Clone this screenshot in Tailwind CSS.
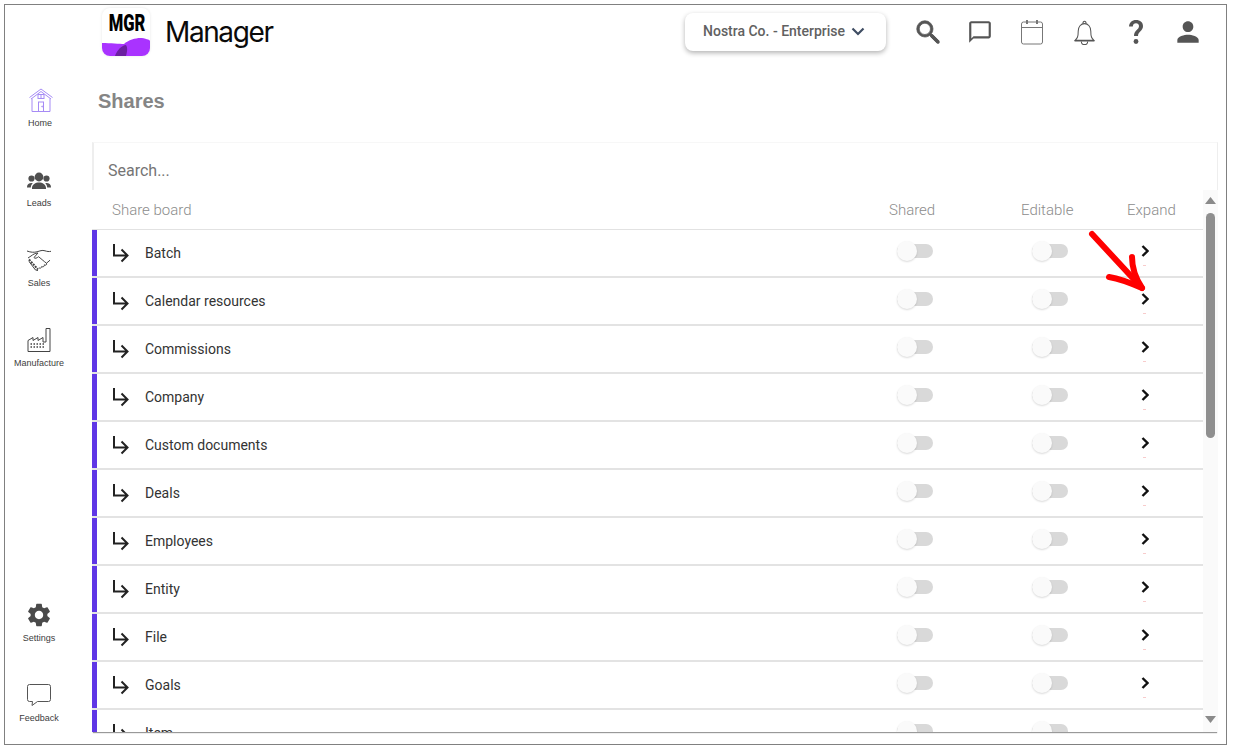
<!DOCTYPE html>
<html><head><meta charset="utf-8"><script src="https://cdn.jsdelivr.net/npm/@tailwindcss/browser@4"></script></head>
<body class="bg-white font-['Roboto',sans-serif] overflow-hidden">
<div class="pl-1 pt-1">
<div class="relative flex w-[1223px] h-[741px] border border-[#808080] bg-white overflow-hidden">

  <!-- sidebar -->
  <aside class="w-[87px] shrink-0 flex flex-col justify-between pt-[79px] pb-[21px] font-['Liberation_Sans',sans-serif] text-[9px] leading-3 text-[#3d3d3d]">
    <div class="w-[68px] flex flex-col gap-9">
      <div class="h-11 flex flex-col items-center">
        <div class="h-8 flex items-center justify-center ml-[3px]">
          <svg width="26" height="26" viewBox="0 0 26 26" fill="none" stroke="#a68bf5" stroke-width="1"><path d="M1.500 10.500 13 2l11.500 8.500M3 12 13 4.500 23 12M4 11.500V24.500H22V11.500"/><rect x="10" y="7.500" width="6" height="4"/><path d="M13 7.500v4"/><rect x="10.500" y="15" width="5" height="9.500"/><circle cx="14.200" cy="19.500" r=".5"/></svg>
        </div>
        <span class="h-3 pt-px ml-[2px]">Home</span>
      </div>
      <div class="h-11 flex flex-col items-center">
        <div class="h-8 flex items-center justify-center pt-0.5">
          <svg width="24" height="18" viewBox="0 0 24 18" fill="#4f4f4f"><circle cx="12" cy="5" r="4.400"/><circle cx="4.500" cy="6.500" r="3.100"/><circle cx="19.500" cy="6.500" r="3.100"/><path d="M5 16c0-3.500 3.500-5.500 7-5.500s7 2 7 5.500v1H5zM0 15c0-2.500 2-4 4.500-4 .5 0 1 .1 1.200.2C4.500 12.300 3.800 14 3.800 15.500H0zM24 15c0-2.500-2-4-4.500-4-.5 0-1 .1-1.200.2 1.200 1.100 1.900 2.800 1.900 4.300H24z"/></svg>
        </div>
        <span class="h-3 pt-px">Leads</span>
      </div>
      <div class="h-11 flex flex-col items-center">
        <div class="h-8 flex items-center justify-center pt-0.5">
          <svg width="26" height="24" viewBox="0 0 26 24" fill="none" stroke="#444" stroke-width="1"><path d="M1 2c4 1.500 7 1.500 10 .8 3-.8 5-2 8-1 2 .7 4 1 6 .5M2 9l3-2c2-1.500 4-2.800 7-3M12 4 8 8.500c1 1.500 3 .5 4.500-.8 1.500 1 5.500 4.800 8 6.500l3.500-3M20.500 14.200c.8 1.500-1 2.600-2.200 1.600M18.300 15.800c.5 1.500-1.300 2.700-2.600 1.700M15.700 17.500c0 1.500-1.700 2.200-2.800 1.200"/><path stroke-width="2" stroke-dasharray="2 1" d="M3 10.500 12 20.500"/><path d="M3 12.500 9.500 21l2.500.5"/></svg>
        </div>
        <span class="h-3 pt-px">Sales</span>
      </div>
      <div class="h-11 flex flex-col items-center">
        <div class="h-8 flex items-center justify-center">
          <svg width="24" height="24" viewBox="0 0 24 24" fill="none" stroke="#444" stroke-width="1"><path d="M1 23.500V12.500L6 9.500V12.500L11 9.500V12.500L16 9.500V14H19V.5H23V23.500Z"/><path stroke-width="1.500" stroke-dasharray="1.500 1.500" d="M3.500 16H17M3.500 19H17"/></svg>
        </div>
        <span class="h-3 pt-px">Manufacture</span>
      </div>
    </div>
    <div class="w-[68px] flex flex-col gap-9">
      <div class="h-11 flex flex-col items-center">
        <div class="h-8 flex items-center justify-center">
          <svg width="28" height="28" viewBox="0 0 24 24" fill="#4a4a4a"><path d="M19.140 12.940c.04-.3.06-.61.06-.94 0-.32-.02-.64-.07-.94l2.030-1.580c.18-.14.23-.41.12-.61l-1.920-3.320c-.12-.22-.37-.29-.59-.22l-2.390.96c-.5-.38-1.030-.7-1.620-.94l-.36-2.540c-.04-.24-.24-.41-.48-.41h-3.840c-.24 0-.43.17-.47.41l-.36 2.540c-.59.24-1.130.57-1.620.94l-2.390-.96c-.22-.08-.47 0-.59.22L2.740 8.870c-.12.21-.08.47.12.61l2.030 1.580c-.05.3-.09.63-.09.94s.02.64.07.94l-2.030 1.580c-.18.14-.23.41-.12.61l1.920 3.320c.12.22.37.29.59.22l2.390-.96c.5.38 1.030.7 1.620.94l.36 2.540c.05.24.24.41.48.41h3.840c.24 0 .44-.17.47-.41l.36-2.540c.59-.24 1.130-.56 1.620-.94l2.390.96c.22.08.47 0 .59-.22l1.920-3.320c.12-.22.07-.47-.12-.61l-2.010-1.580zM12 15.600c-1.980 0-3.600-1.620-3.600-3.600s1.620-3.600 3.600-3.600 3.600 1.620 3.600 3.600-1.620 3.600-3.600 3.600z"/></svg>
        </div>
        <span class="h-3 pt-px">Settings</span>
      </div>
      <div class="h-11 flex flex-col items-center">
        <div class="h-8 flex items-center justify-center">
          <svg width="24" height="22" viewBox="0 0 24 22" fill="none" stroke="#555" stroke-width="1"><path d="M2.500.5h19a2 2 0 0 1 2 2v13a2 2 0 0 1-2 2H10.500L5 21.500l.5-4h-3a2 2 0 0 1-2-2v-13a2 2 0 0 1 2-2z"/></svg>
        </div>
        <span class="h-3 pt-px">Feedback</span>
      </div>
    </div>
  </aside>

  <!-- main -->
  <main class="flex-1 min-w-0 flex flex-col">
    <header class="h-[54px] shrink-0 flex items-center pr-3 pl-[10px]">
      <div class="relative w-12 h-12 rounded-lg bg-white shadow-[0_0_3px_rgba(0,0,0,0.1)] overflow-hidden shrink-0">
        <svg class="absolute inset-0" width="48" height="48" viewBox="0 0 48 48"><path fill="#a933ff" d="M0 35C8 35 18 36 22 36 26 32 34 30 38 30 43 30 48 32 48 33V48H0Z"/><path fill="#6b1fa0" d="M13 48C15 42 20 37 24 37 26 40 25 44 24 48Z"/></svg>
        <div class="absolute top-[2px] inset-x-0 text-center font-['Roboto',sans-serif] font-black text-[23px] leading-7 text-black scale-x-[0.72]">MGR</div>
      </div>
      <span class="ml-[15px] font-['Inter',sans-serif] text-[28px] tracking-[-1.4px] text-[#0a0a0a]">Manager</span>
      <div class="ml-auto mr-4 w-[201px] h-[38px] rounded-lg bg-white shadow-[0_2px_5px_rgba(0,0,0,0.3)] flex items-center pl-[18px] gap-[5px] pb-0.5 text-sm font-medium text-[#616161]">
        <span>Nostra Co. - Enterprise</span>
        <svg width="16" height="16" viewBox="0 0 16 16" fill="none" stroke="#3f4d63" stroke-width="2.200"><path d="M2.500 5.500 8 11l5.500-5.500"/></svg>
      </div>
      <div class="w-[52px] flex justify-center">
        <svg width="30" height="30" viewBox="0 0 24 24" fill="#555"><path d="M15.500 14h-.79l-.28-.27A6.470 6.470 0 0 0 16 9.500 6.500 6.500 0 1 0 9.500 16c1.610 0 3.090-.59 4.230-1.570l.27.28v.79l5 4.990L20.490 19l-4.990-5zm-6 0C7.010 14 5 11.990 5 9.500S7.010 5 9.500 5 14 7.010 14 9.500 11.990 14 9.500 14z" stroke="#555" stroke-width=".6"/><path d="M15 15l5 5" stroke="#555" stroke-width="2.800" stroke-linecap="round"/></svg>
      </div>
      <div class="w-[52px] flex justify-center">
        <svg width="26" height="26" viewBox="0 0 24 24" fill="#555"><path d="M20 2H4c-1.100 0-2 .9-2 2v18l4-4h14c1.100 0 2-.9 2-2V4c0-1.100-.9-2-2-2zm0 14H6l-2 2V4h16v12z"/></svg>
      </div>
      <div class="w-[52px] flex justify-center">
        <svg width="24" height="26" viewBox="0 0 24 26" fill="none" stroke="#777" stroke-width="1"><rect x="1.500" y="3" width="21" height="22" rx="2"/><path d="M1.500 8.500h21"/><path stroke-width="2" d="M7 1v4M17 1v4"/></svg>
      </div>
      <div class="w-[52px] flex justify-center">
        <svg width="23" height="28" viewBox="0 0 22 26" fill="none" stroke="#555" stroke-width="1"><path d="M2 21c2-2 3-3 3-9 0-4 2.500-7 6-7s6 3 6 7c0 6 1 7 3 9zM1.500 21.500h19"/><path d="M9.500 5c0-3 3-3 3 0M8 22c0 4 6 4 6 0"/></svg>
      </div>
      <div class="w-[52px] flex justify-center">
        <svg width="18" height="26" viewBox="0 0 18 26" fill="#555"><path d="M2 7.500C2.300 3.500 5 1 9 1c4.300 0 7 2.500 7 6 0 5-5 5.500-5 10H7c0-6 5-6 5-10 0-1.500-1.200-2.700-3-2.700-1.900 0-3 1.200-3.200 3.200z"/><circle cx="9" cy="22.500" r="2.400"/></svg>
      </div>
      <div class="w-[52px] flex justify-center">
        <svg width="32" height="32" viewBox="0 0 24 24" fill="#555"><path d="M12 12c2.210 0 4-1.790 4-4s-1.790-4-4-4-4 1.790-4 4 1.790 4 4 4zm0 2c-2.670 0-8 1.340-8 4v2h16v-2c0-2.660-5.330-4-8-4z"/></svg>
      </div>
    </header>

    <div class="h-[83px] shrink-0 pt-7 pl-[6px] font-['Liberation_Sans',sans-serif] font-bold text-xl leading-7 text-[#858585]">Shares</div>

    <section class="w-[1126px] h-[590px] shrink-0 bg-white shadow-[0_2px_1px_-1px_rgba(0,0,0,0.4)] overflow-hidden flex flex-col">
      <div class="h-12 shrink-0 flex items-center pl-[14px] pt-2 text-base text-[#757575] border-l-2 border-[#eeeeee] border-t border-t-[#f7f7f7] border-r border-r-[#eeeeee]">Search...</div>
      <div class="flex-1 min-h-0 flex">
        <div class="flex-1 min-w-0 flex flex-col overflow-hidden">
          <div class="h-10 shrink-0 flex items-center border-b border-[#e2e2e2] pt-0.5 text-[15px] font-light text-[#8c8c8c]">
            <span class="ml-5 flex-1">Share board</span>
            <span class="w-[132px]">Shared</span>
            <span class="w-[106px]">Editable</span>
            <span class="w-[76px]">Expand</span>
          </div>

          <div class="h-12 shrink-0 flex items-center border-b-2 border-[#e3e3e3] text-sm text-[#333]">
            <div class="w-[5px] self-stretch bg-[#5f36e6]"></div>
            <svg class="ml-[15px] mr-[15px]" width="18" height="20" viewBox="0 0 18 20" fill="none" stroke="#222" stroke-width="2"><path d="M2 1v11.500h13M9.500 6.500l6 6-6 6"/></svg>
            <span class="flex-1">Batch</span>
            <div class="w-[132px] pl-2 mb-1"><div class="relative w-9 h-[14px] rounded-full bg-[#d9d9d9]"><div class="absolute left-0 -top-[3px] size-5 rounded-full bg-[#fafafa] shadow-[0_1px_2px_rgba(0,0,0,0.15)]"></div></div></div>
            <div class="w-[106px] pl-[11px] mb-1"><div class="relative w-9 h-[14px] rounded-full bg-[#d9d9d9]"><div class="absolute left-0 -top-[3px] size-5 rounded-full bg-[#fafafa] shadow-[0_1px_2px_rgba(0,0,0,0.15)]"></div></div></div>
            <div class="w-[76px] pl-[14px] relative mb-1"><svg width="8" height="12" viewBox="0 0 8 12" fill="none" stroke="#111" stroke-width="2.400"><path d="M1.500 1 6.500 6l-5 5"/></svg><div class="absolute left-[16px] top-[20px] w-[3px] h-px bg-[#f8cccc]"></div></div>
          </div>
          <div class="h-12 shrink-0 flex items-center border-b-2 border-[#e3e3e3] text-sm text-[#333]">
            <div class="w-[5px] self-stretch bg-[#5f36e6]"></div>
            <svg class="ml-[15px] mr-[15px]" width="18" height="20" viewBox="0 0 18 20" fill="none" stroke="#222" stroke-width="2"><path d="M2 1v11.500h13M9.500 6.500l6 6-6 6"/></svg>
            <span class="flex-1">Calendar resources</span>
            <div class="w-[132px] pl-2 mb-1"><div class="relative w-9 h-[14px] rounded-full bg-[#d9d9d9]"><div class="absolute left-0 -top-[3px] size-5 rounded-full bg-[#fafafa] shadow-[0_1px_2px_rgba(0,0,0,0.15)]"></div></div></div>
            <div class="w-[106px] pl-[11px] mb-1"><div class="relative w-9 h-[14px] rounded-full bg-[#d9d9d9]"><div class="absolute left-0 -top-[3px] size-5 rounded-full bg-[#fafafa] shadow-[0_1px_2px_rgba(0,0,0,0.15)]"></div></div></div>
            <div class="w-[76px] pl-[14px] relative mb-1"><svg width="8" height="12" viewBox="0 0 8 12" fill="none" stroke="#111" stroke-width="2.400"><path d="M1.500 1 6.500 6l-5 5"/></svg><div class="absolute left-[16px] top-[20px] w-[3px] h-px bg-[#f8cccc]"></div></div>
          </div>
          <div class="h-12 shrink-0 flex items-center border-b-2 border-[#e3e3e3] text-sm text-[#333]">
            <div class="w-[5px] self-stretch bg-[#5f36e6]"></div>
            <svg class="ml-[15px] mr-[15px]" width="18" height="20" viewBox="0 0 18 20" fill="none" stroke="#222" stroke-width="2"><path d="M2 1v11.500h13M9.500 6.500l6 6-6 6"/></svg>
            <span class="flex-1">Commissions</span>
            <div class="w-[132px] pl-2 mb-1"><div class="relative w-9 h-[14px] rounded-full bg-[#d9d9d9]"><div class="absolute left-0 -top-[3px] size-5 rounded-full bg-[#fafafa] shadow-[0_1px_2px_rgba(0,0,0,0.15)]"></div></div></div>
            <div class="w-[106px] pl-[11px] mb-1"><div class="relative w-9 h-[14px] rounded-full bg-[#d9d9d9]"><div class="absolute left-0 -top-[3px] size-5 rounded-full bg-[#fafafa] shadow-[0_1px_2px_rgba(0,0,0,0.15)]"></div></div></div>
            <div class="w-[76px] pl-[14px] relative mb-1"><svg width="8" height="12" viewBox="0 0 8 12" fill="none" stroke="#111" stroke-width="2.400"><path d="M1.500 1 6.500 6l-5 5"/></svg><div class="absolute left-[16px] top-[20px] w-[3px] h-px bg-[#f8cccc]"></div></div>
          </div>
          <div class="h-12 shrink-0 flex items-center border-b-2 border-[#e3e3e3] text-sm text-[#333]">
            <div class="w-[5px] self-stretch bg-[#5f36e6]"></div>
            <svg class="ml-[15px] mr-[15px]" width="18" height="20" viewBox="0 0 18 20" fill="none" stroke="#222" stroke-width="2"><path d="M2 1v11.500h13M9.500 6.500l6 6-6 6"/></svg>
            <span class="flex-1">Company</span>
            <div class="w-[132px] pl-2 mb-1"><div class="relative w-9 h-[14px] rounded-full bg-[#d9d9d9]"><div class="absolute left-0 -top-[3px] size-5 rounded-full bg-[#fafafa] shadow-[0_1px_2px_rgba(0,0,0,0.15)]"></div></div></div>
            <div class="w-[106px] pl-[11px] mb-1"><div class="relative w-9 h-[14px] rounded-full bg-[#d9d9d9]"><div class="absolute left-0 -top-[3px] size-5 rounded-full bg-[#fafafa] shadow-[0_1px_2px_rgba(0,0,0,0.15)]"></div></div></div>
            <div class="w-[76px] pl-[14px] relative mb-1"><svg width="8" height="12" viewBox="0 0 8 12" fill="none" stroke="#111" stroke-width="2.400"><path d="M1.500 1 6.500 6l-5 5"/></svg><div class="absolute left-[16px] top-[20px] w-[3px] h-px bg-[#f8cccc]"></div></div>
          </div>
          <div class="h-12 shrink-0 flex items-center border-b-2 border-[#e3e3e3] text-sm text-[#333]">
            <div class="w-[5px] self-stretch bg-[#5f36e6]"></div>
            <svg class="ml-[15px] mr-[15px]" width="18" height="20" viewBox="0 0 18 20" fill="none" stroke="#222" stroke-width="2"><path d="M2 1v11.500h13M9.500 6.500l6 6-6 6"/></svg>
            <span class="flex-1">Custom documents</span>
            <div class="w-[132px] pl-2 mb-1"><div class="relative w-9 h-[14px] rounded-full bg-[#d9d9d9]"><div class="absolute left-0 -top-[3px] size-5 rounded-full bg-[#fafafa] shadow-[0_1px_2px_rgba(0,0,0,0.15)]"></div></div></div>
            <div class="w-[106px] pl-[11px] mb-1"><div class="relative w-9 h-[14px] rounded-full bg-[#d9d9d9]"><div class="absolute left-0 -top-[3px] size-5 rounded-full bg-[#fafafa] shadow-[0_1px_2px_rgba(0,0,0,0.15)]"></div></div></div>
            <div class="w-[76px] pl-[14px] relative mb-1"><svg width="8" height="12" viewBox="0 0 8 12" fill="none" stroke="#111" stroke-width="2.400"><path d="M1.500 1 6.500 6l-5 5"/></svg><div class="absolute left-[16px] top-[20px] w-[3px] h-px bg-[#f8cccc]"></div></div>
          </div>
          <div class="h-12 shrink-0 flex items-center border-b-2 border-[#e3e3e3] text-sm text-[#333]">
            <div class="w-[5px] self-stretch bg-[#5f36e6]"></div>
            <svg class="ml-[15px] mr-[15px]" width="18" height="20" viewBox="0 0 18 20" fill="none" stroke="#222" stroke-width="2"><path d="M2 1v11.500h13M9.500 6.500l6 6-6 6"/></svg>
            <span class="flex-1">Deals</span>
            <div class="w-[132px] pl-2 mb-1"><div class="relative w-9 h-[14px] rounded-full bg-[#d9d9d9]"><div class="absolute left-0 -top-[3px] size-5 rounded-full bg-[#fafafa] shadow-[0_1px_2px_rgba(0,0,0,0.15)]"></div></div></div>
            <div class="w-[106px] pl-[11px] mb-1"><div class="relative w-9 h-[14px] rounded-full bg-[#d9d9d9]"><div class="absolute left-0 -top-[3px] size-5 rounded-full bg-[#fafafa] shadow-[0_1px_2px_rgba(0,0,0,0.15)]"></div></div></div>
            <div class="w-[76px] pl-[14px] relative mb-1"><svg width="8" height="12" viewBox="0 0 8 12" fill="none" stroke="#111" stroke-width="2.400"><path d="M1.500 1 6.500 6l-5 5"/></svg><div class="absolute left-[16px] top-[20px] w-[3px] h-px bg-[#f8cccc]"></div></div>
          </div>
          <div class="h-12 shrink-0 flex items-center border-b-2 border-[#e3e3e3] text-sm text-[#333]">
            <div class="w-[5px] self-stretch bg-[#5f36e6]"></div>
            <svg class="ml-[15px] mr-[15px]" width="18" height="20" viewBox="0 0 18 20" fill="none" stroke="#222" stroke-width="2"><path d="M2 1v11.500h13M9.500 6.500l6 6-6 6"/></svg>
            <span class="flex-1">Employees</span>
            <div class="w-[132px] pl-2 mb-1"><div class="relative w-9 h-[14px] rounded-full bg-[#d9d9d9]"><div class="absolute left-0 -top-[3px] size-5 rounded-full bg-[#fafafa] shadow-[0_1px_2px_rgba(0,0,0,0.15)]"></div></div></div>
            <div class="w-[106px] pl-[11px] mb-1"><div class="relative w-9 h-[14px] rounded-full bg-[#d9d9d9]"><div class="absolute left-0 -top-[3px] size-5 rounded-full bg-[#fafafa] shadow-[0_1px_2px_rgba(0,0,0,0.15)]"></div></div></div>
            <div class="w-[76px] pl-[14px] relative mb-1"><svg width="8" height="12" viewBox="0 0 8 12" fill="none" stroke="#111" stroke-width="2.400"><path d="M1.500 1 6.500 6l-5 5"/></svg><div class="absolute left-[16px] top-[20px] w-[3px] h-px bg-[#f8cccc]"></div></div>
          </div>
          <div class="h-12 shrink-0 flex items-center border-b-2 border-[#e3e3e3] text-sm text-[#333]">
            <div class="w-[5px] self-stretch bg-[#5f36e6]"></div>
            <svg class="ml-[15px] mr-[15px]" width="18" height="20" viewBox="0 0 18 20" fill="none" stroke="#222" stroke-width="2"><path d="M2 1v11.500h13M9.500 6.500l6 6-6 6"/></svg>
            <span class="flex-1">Entity</span>
            <div class="w-[132px] pl-2 mb-1"><div class="relative w-9 h-[14px] rounded-full bg-[#d9d9d9]"><div class="absolute left-0 -top-[3px] size-5 rounded-full bg-[#fafafa] shadow-[0_1px_2px_rgba(0,0,0,0.15)]"></div></div></div>
            <div class="w-[106px] pl-[11px] mb-1"><div class="relative w-9 h-[14px] rounded-full bg-[#d9d9d9]"><div class="absolute left-0 -top-[3px] size-5 rounded-full bg-[#fafafa] shadow-[0_1px_2px_rgba(0,0,0,0.15)]"></div></div></div>
            <div class="w-[76px] pl-[14px] relative mb-1"><svg width="8" height="12" viewBox="0 0 8 12" fill="none" stroke="#111" stroke-width="2.400"><path d="M1.500 1 6.500 6l-5 5"/></svg><div class="absolute left-[16px] top-[20px] w-[3px] h-px bg-[#f8cccc]"></div></div>
          </div>
          <div class="h-12 shrink-0 flex items-center border-b-2 border-[#e3e3e3] text-sm text-[#333]">
            <div class="w-[5px] self-stretch bg-[#5f36e6]"></div>
            <svg class="ml-[15px] mr-[15px]" width="18" height="20" viewBox="0 0 18 20" fill="none" stroke="#222" stroke-width="2"><path d="M2 1v11.500h13M9.500 6.500l6 6-6 6"/></svg>
            <span class="flex-1">File</span>
            <div class="w-[132px] pl-2 mb-1"><div class="relative w-9 h-[14px] rounded-full bg-[#d9d9d9]"><div class="absolute left-0 -top-[3px] size-5 rounded-full bg-[#fafafa] shadow-[0_1px_2px_rgba(0,0,0,0.15)]"></div></div></div>
            <div class="w-[106px] pl-[11px] mb-1"><div class="relative w-9 h-[14px] rounded-full bg-[#d9d9d9]"><div class="absolute left-0 -top-[3px] size-5 rounded-full bg-[#fafafa] shadow-[0_1px_2px_rgba(0,0,0,0.15)]"></div></div></div>
            <div class="w-[76px] pl-[14px] relative mb-1"><svg width="8" height="12" viewBox="0 0 8 12" fill="none" stroke="#111" stroke-width="2.400"><path d="M1.500 1 6.500 6l-5 5"/></svg><div class="absolute left-[16px] top-[20px] w-[3px] h-px bg-[#f8cccc]"></div></div>
          </div>
          <div class="h-12 shrink-0 flex items-center border-b-2 border-[#e3e3e3] text-sm text-[#333]">
            <div class="w-[5px] self-stretch bg-[#5f36e6]"></div>
            <svg class="ml-[15px] mr-[15px]" width="18" height="20" viewBox="0 0 18 20" fill="none" stroke="#222" stroke-width="2"><path d="M2 1v11.500h13M9.500 6.500l6 6-6 6"/></svg>
            <span class="flex-1">Goals</span>
            <div class="w-[132px] pl-2 mb-1"><div class="relative w-9 h-[14px] rounded-full bg-[#d9d9d9]"><div class="absolute left-0 -top-[3px] size-5 rounded-full bg-[#fafafa] shadow-[0_1px_2px_rgba(0,0,0,0.15)]"></div></div></div>
            <div class="w-[106px] pl-[11px] mb-1"><div class="relative w-9 h-[14px] rounded-full bg-[#d9d9d9]"><div class="absolute left-0 -top-[3px] size-5 rounded-full bg-[#fafafa] shadow-[0_1px_2px_rgba(0,0,0,0.15)]"></div></div></div>
            <div class="w-[76px] pl-[14px] relative mb-1"><svg width="8" height="12" viewBox="0 0 8 12" fill="none" stroke="#111" stroke-width="2.400"><path d="M1.500 1 6.500 6l-5 5"/></svg><div class="absolute left-[16px] top-[20px] w-[3px] h-px bg-[#f8cccc]"></div></div>
          </div>
          <div class="h-12 shrink-0 flex items-center border-b-2 border-[#e3e3e3] text-sm text-[#333]">
            <div class="w-[5px] self-stretch bg-[#5f36e6]"></div>
            <svg class="ml-[15px] mr-[15px]" width="18" height="20" viewBox="0 0 18 20" fill="none" stroke="#222" stroke-width="2"><path d="M2 1v11.500h13M9.500 6.500l6 6-6 6"/></svg>
            <span class="flex-1">Item</span>
            <div class="w-[132px] pl-2 mb-1"><div class="relative w-9 h-[14px] rounded-full bg-[#d9d9d9]"><div class="absolute left-0 -top-[3px] size-5 rounded-full bg-[#fafafa] shadow-[0_1px_2px_rgba(0,0,0,0.15)]"></div></div></div>
            <div class="w-[106px] pl-[11px] mb-1"><div class="relative w-9 h-[14px] rounded-full bg-[#d9d9d9]"><div class="absolute left-0 -top-[3px] size-5 rounded-full bg-[#fafafa] shadow-[0_1px_2px_rgba(0,0,0,0.15)]"></div></div></div>
            <div class="w-[76px]"></div>
          </div>
        </div>
        <!-- scrollbar -->
        <div class="w-[15px] shrink-0 bg-[#fafafa] flex flex-col items-center pt-[7px] pb-[9px]">
          <svg width="11" height="7" viewBox="0 0 11 7" fill="#8a8a8a"><path d="M5.500 0 11 7H0z"/></svg>
          <div class="mt-[9px] w-[9px] h-[225px] rounded-full bg-[#8f8f8f]"></div>
          <svg class="mt-auto" width="11" height="7" viewBox="0 0 11 7" fill="#8a8a8a"><path d="M5.500 7 0 0h11z"/></svg>
        </div>
      </div>
    </section>
  </main>

  <!-- red annotation arrow -->
  <svg class="absolute left-[1080px] top-[220px]" width="70" height="70" viewBox="0 0 70 70" fill="none" stroke="#ff0000" stroke-width="6" stroke-linecap="round" stroke-linejoin="round"><path d="M7 9 57 63"/><path d="M47 32C47 42 51 54 57 63 48 59 36 54 24 52"/></svg>
</div>
</div>
</body></html>
